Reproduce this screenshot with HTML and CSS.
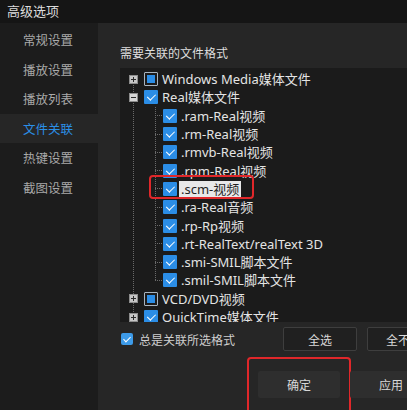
FILE: index.html
```html
<!DOCTYPE html>
<html lang="zh-CN">
<head>
<meta charset="utf-8">
<link rel="stylesheet" href="styles.css">
</head>
<body>
<div class="win">
  <div class="titlebar">高级选项</div>
  <div class="content">
    <nav class="sidebar">
      <div class="nav-item">常规设置</div>
      <div class="nav-item">播放设置</div>
      <div class="nav-item">播放列表</div>
      <div class="nav-item active">文件关联</div>
      <div class="nav-item">热键设置</div>
      <div class="nav-item">截图设置</div>
    </nav>
    <main class="main">
      <div class="section-title">需要关联的文件格式</div>
      <div class="tree">
        <div class="row top"><span class="exp plus"></span><span class="cb part"></span><span class="label">Windows Media媒体文件</span></div>
        <div class="row top"><span class="exp minus"></span><span class="cb on"></span><span class="label">Real媒体文件</span></div>
        <div class="children">
          <div class="row child"><span class="cb on"></span><span class="label">.ram-Real视频</span></div>
          <div class="row child"><span class="cb on"></span><span class="label">.rm-Real视频</span></div>
          <div class="row child"><span class="cb on"></span><span class="label">.rmvb-Real视频</span></div>
          <div class="row child"><span class="cb on"></span><span class="label">.rpm-Real视频</span></div>
          <div class="row child marked"><span class="cb on"></span><span class="label selected">.scm-视频</span><span class="redbox small"></span></div>
          <div class="row child"><span class="cb on"></span><span class="label">.ra-Real音频</span></div>
          <div class="row child"><span class="cb on"></span><span class="label">.rp-Rp视频</span></div>
          <div class="row child"><span class="cb on"></span><span class="label">.rt-RealText/realText 3D</span></div>
          <div class="row child"><span class="cb on"></span><span class="label">.smi-SMIL脚本文件</span></div>
          <div class="row child"><span class="cb on"></span><span class="label">.smil-SMIL脚本文件</span></div>
        </div>
        <div class="row top"><span class="exp plus"></span><span class="cb part"></span><span class="label">VCD/DVD视频</span></div>
        <div class="row top"><span class="exp plus"></span><span class="cb on"></span><span class="label">QuickTime媒体文件</span></div>
      </div>
      <div class="opts">
        <label class="always"><span class="cb2"></span><span>总是关联所选格式</span></label>
        <button class="btn">全选</button>
        <button class="btn">全不选</button>
      </div>
      <div class="actions">
        <button class="btn2 ok">确定<span class="redbox big"></span></button>
        <button class="btn2">应用</button>
      </div>
    </main>
  </div>
</div>
</body>
</html>
```

FILE: styles.css
```css
* { box-sizing: border-box; }
html, body { margin: 0; padding: 0; }
body {
  width: 407px;
  height: 410px;
  overflow: hidden;
  background: #1c1c1c;
  font-family: "Noto Sans", "Noto Sans CJK SC", sans-serif;
  color: #e2e2e2;
}
.win { width: 407px; height: 410px; display: flex; flex-direction: column; }
.titlebar {
  height: 23px;
  line-height: 22px;
  padding-left: 7px;
  background: #151515;
  font-size: 13px;
  color: #dcdcdc;
  font-family: "Noto Sans CJK SC", sans-serif;
}
.content { flex: 1; display: flex; min-height: 0; }
.sidebar {
  width: 98px;
  flex: 0 0 98px;
  background: #1c1c1c;
  padding-top: 2px;
}
.nav-item {
  height: 29.5px;
  line-height: 29.5px;
  padding-left: 23px;
  font-size: 12.5px;
  color: #a9a9a9;
  font-family: "Noto Sans CJK SC", sans-serif;
}
.nav-item.active { background: #262626; color: #2b8fe6; }
.main {
  flex: 1;
  background: #262626;
  padding-left: 22px;
  overflow: hidden;
  min-width: 0;
}
.section-title {
  margin-top: 22px;
  height: 16px;
  line-height: 16px;
  font-size: 12px;
  color: #dedede;
  font-family: "Noto Sans CJK SC", sans-serif;
  margin-bottom: 7px;
}
.tree {
  width: 320px;
  height: 254px;
  background-color: #1b1b1b;
  overflow: hidden;
  padding-top: 2px;
  background-image: repeating-linear-gradient(to bottom, #6a6a6a 0 1px, transparent 1px 2px);
  background-size: 1px 100%;
  background-position: 13px 11px;
  background-repeat: no-repeat;
}
.row {
  height: 18.3px;
  display: flex;
  align-items: center;
  font-size: 13px;
  white-space: nowrap;
  position: relative;
}
.row.top { padding-left: 9px; }
.row.child {
  padding-left: 43px;
  background-image: repeating-linear-gradient(to right, #6a6a6a 0 1px, transparent 1px 2px);
  background-size: 8px 1px;
  background-position: 35px 50%;
  background-repeat: no-repeat;
}
.children {
  background-image: repeating-linear-gradient(to bottom, #6a6a6a 0 1px, transparent 1px 2px);
  background-size: 1px calc(100% - 9px);
  background-position: 35px 0;
  background-repeat: no-repeat;
}
.exp {
  width: 9px;
  height: 9px;
  border: 1px solid #8c8c8c;
  background: #c6c6c6;
  position: relative;
  margin-right: 6px;
  flex: 0 0 9px;
}
.exp::before {
  content: "";
  position: absolute;
  left: 1px; right: 1px; top: 3px;
  height: 1px;
  background: #2a2a2a;
}
.exp.plus::after {
  content: "";
  position: absolute;
  top: 1px; bottom: 1px; left: 3px;
  width: 1px;
  background: #2a2a2a;
}
.exp.minus { background: #d6d6d6; }
.cb {
  width: 14px;
  height: 14px;
  flex: 0 0 14px;
  margin-right: 4px;
  position: relative;
  border-radius: 1px;
}
.cb.on { background: #2b8de6; }
.cb.on::after {
  content: "";
  position: absolute;
  left: 4.5px; top: 2px;
  width: 3.5px; height: 7px;
  border: solid #fff;
  border-width: 0 1.8px 1.8px 0;
  transform: rotate(45deg);
}
.cb.part {
  border: 1px solid #a8b4c0;
  background: #1b1b1b;
}
.cb.part::after {
  content: "";
  position: absolute;
  left: 2px; top: 2px; right: 2px; bottom: 2px;
  background: #2b8de6;
}
.label { color: #e4e4e4; line-height: 16px; }
.label.selected { background: #e8e8e8; color: #1f1f1f; padding: 0 2px; margin-left: -2px; }
.redbox {
  position: absolute;
  border: 2px solid #e0272a;
  border-radius: 4px;
  pointer-events: none;
}
.redbox.small { left: 29px; top: -5px; width: 105px; height: 24px; }
.opts {
  display: flex;
  align-items: center;
  margin-top: 5px;
  height: 24px;
}
.always {
  flex: 0 0 163px;
  display: flex;
  align-items: center;
  font-size: 12px;
  color: #cfcfcf;
  font-family: "Noto Sans CJK SC", sans-serif;
}
.cb2 {
  width: 12px; height: 12px;
  margin-left: 1px;
  margin-right: 6px;
  border-radius: 2px;
  background: #3d9be9;
  position: relative;
}
.cb2::after {
  content: "";
  position: absolute;
  left: 3.8px; top: 1.5px;
  width: 3px; height: 6px;
  border: solid #fff;
  border-width: 0 1.7px 1.7px 0;
  transform: rotate(45deg);
}
.btn {
  flex: 0 0 74px;
  width: 74px;
  height: 24px;
  margin: 0 10px 0 0;
  background: #202020;
  border: 1px solid #3e3e3e;
  border-radius: 2px;
  color: #dadada;
  font-size: 12px;
  font-family: "Noto Sans CJK SC", sans-serif;
  padding: 0;
}
.actions {
  display: flex;
  margin-top: 20px;
  padding-left: 138px;
}
.btn2 {
  flex: 0 0 82px;
  width: 82px;
  height: 27px;
  margin-right: 10px;
  background: #2e2e2e;
  border: 0;
  border-radius: 2px;
  color: #d8d8d8;
  font-size: 12px;
  font-family: "Noto Sans CJK SC", sans-serif;
  padding: 0;
  position: relative;
}
.redbox.big { left: -11px; top: -14px; width: 104px; height: 70px; }
```
